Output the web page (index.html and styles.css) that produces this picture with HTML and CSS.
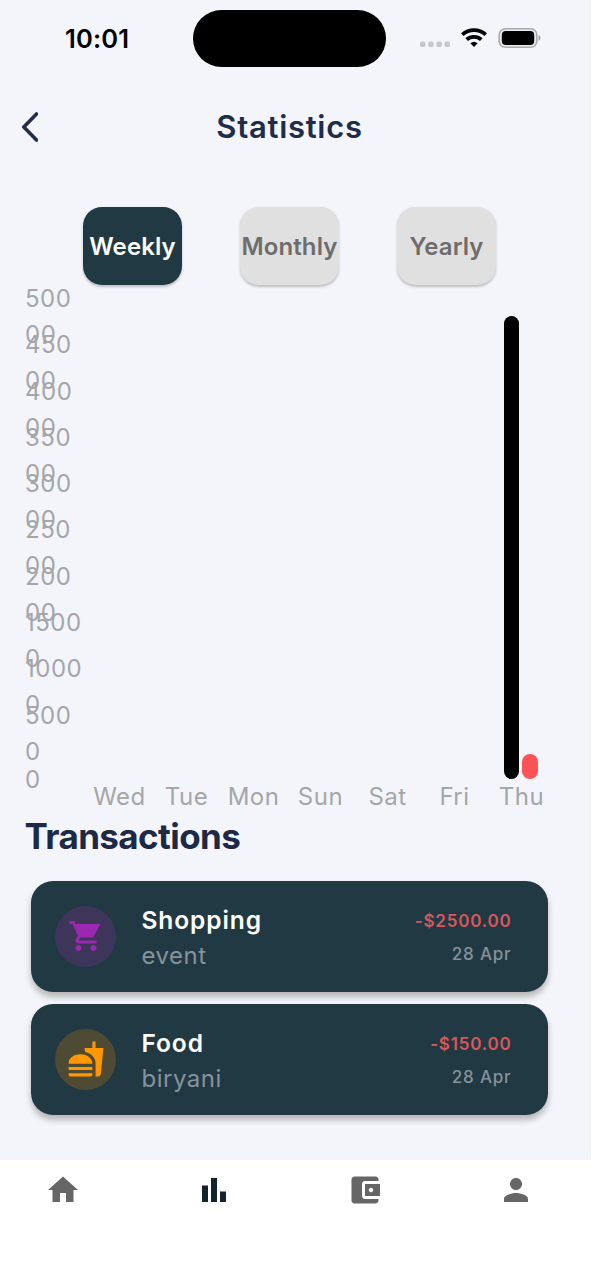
FILE: index.html
```html
<!DOCTYPE html>
<html lang="en">
<head>
<meta charset="utf-8">
<title>Statistics</title>
<link rel="stylesheet" href="styles.css">
</head>
<body>
<div class="screen">
  <div class="status">
    <span class="time">10:01</span>
    <span class="island"></span>
    <svg class="signal" width="124" height="24" viewBox="0 0 124 24">
      <g fill="#c6c7cb"><rect x="1" y="14.500" width="5.400" height="5.400" rx="1.600"/><rect x="9.200" y="14.500" width="5.400" height="5.400" rx="1.600"/><rect x="17.400" y="14.500" width="5.400" height="5.400" rx="1.600"/><rect x="25.600" y="14.500" width="5.400" height="5.400" rx="1.600"/></g>
      <g fill="none" stroke="#000" stroke-width="3.800"><path d="M43.300 7.700a17.500 17.500 0 0 1 23.400 0"/><path d="M47.700 12.700a10.900 10.900 0 0 1 14.600 0"/></g>
      <path d="M51.300 16.300a5.600 5.600 0 0 1 7.400 0L55 20z"/>
      <rect x="80.200" y="1.700" width="37.600" height="18.600" rx="6" fill="#e9e9ec" stroke="#aaabae" stroke-width="1.600"/>
      <rect x="82.800" y="4.100" width="32.400" height="13.800" rx="4"/>
      <path d="M119.600 8.100c2.400 1 2.400 4.800 0 5.800z" fill="#999"/>
    </svg>
  </div>

  <header class="header">
    <svg class="back" width="18" height="30" viewBox="0 0 18 30"><path d="M16.500 2 3.800 15l12.700 13"/></svg>
    <h1 class="title">Statistics</h1>
  </header>

  <nav class="tabs">
    <button class="tab active">Weekly</button>
    <button class="tab monthly">Monthly</button>
    <button class="tab yearly">Yearly</button>
  </nav>

  <section class="chart">
    <div class="axis">
      <div class="tick">500<br>00</div>
      <div class="tick">450<br>00</div>
      <div class="tick">400<br>00</div>
      <div class="tick">350<br>00</div>
      <div class="tick">300<br>00</div>
      <div class="tick">250<br>00</div>
      <div class="tick">200<br>00</div>
      <div class="tick">1500<br>0</div>
      <div class="tick">1000<br>0</div>
      <div class="tick">500<br>0</div>
      <div class="tick">0</div>
    </div>
    <div class="plot">
      <div class="bars">
        <div class="day"></div><div class="day"></div><div class="day"></div><div class="day"></div><div class="day"></div><div class="day"></div>
        <div class="day"><i class="bar income"></i><i class="bar expense"></i></div>
      </div>
      <div class="days"><span>Wed</span><span>Tue</span><span>Mon</span><span>Sun</span><span>Sat</span><span>Fri</span><span>Thu</span></div>
    </div>
  </section>

  <h2 class="heading">Transactions</h2>

  <section class="list">
    <article class="card">
      <span class="badge shopping"><svg width="36" height="36" viewBox="0 0 24 24"><path d="M7 18c-1.100 0-1.990.9-1.990 2S5.900 22 7 22s2-.9 2-2-.9-2-2-2zM1 2v2h2l3.600 7.590-1.350 2.450c-.16.28-.25.61-.25.960 0 1.100.9 2 2 2h12v-2H7.420c-.14 0-.25-.11-.25-.25l.03-.12.900-1.630h7.450c.75 0 1.410-.41 1.750-1.030L21.700 4H5.210l-.94-2H1zm16 16c-1.100 0-1.990.9-1.990 2s.89 2 1.990 2 2-.9 2-2-.9-2-2-2z"/></svg></span>
      <div class="info"><b class="name">Shopping</b><span class="note">event</span></div>
      <div class="sum"><b class="amount">-$2500.00</b><span class="date">28 Apr</span></div>
    </article>
    <article class="card">
      <span class="badge food"><svg width="38" height="38" viewBox="0 0 24 24"><path d="M18.060 22.990h1.660c.84 0 1.530-.64 1.630-1.460L23 5.050h-5V1h-1.970v4.050h-4.970l.3 2.340c1.710.47 3.310 1.320 4.270 2.260 1.440 1.420 2.430 2.890 2.430 5.290v8.050zM1 21.990V21h15.030v.99c0 .55-.45 1-1.010 1H2.010c-.56 0-1.010-.45-1.010-1zm15.030-7c0-8-15.030-8-15.030 0h15.030zM1.020 17h15v2h-15z"/></svg></span>
      <div class="info"><b class="name">Food</b><span class="note">biryani</span></div>
      <div class="sum"><b class="amount">-$150.00</b><span class="date">28 Apr</span></div>
    </article>
  </section>
</div>

<footer class="bottom">
  <svg width="36" height="36" viewBox="0 0 24 24"><path d="M10 20v-6h4v6h5v-8h3L12 3 2 12h3v8z"/></svg>
  <svg class="current" width="36" height="36" viewBox="0 0 24 24"><path d="M4 9h4v11H4zM16 13h4v7h-4zM10 4h4v16h-4z"/></svg>
  <svg width="36" height="36" viewBox="0 0 24 24"><path d="M21 18v1c0 1.100-.9 2-2 2H5c-1.110 0-2-.9-2-2V5c0-1.100.89-2 2-2h14c1.100 0 2 .9 2 2v1h-9c-1.110 0-2 .9-2 2v8c0 1.100.89 2 2 2h9zm-9-2h10V8H12v8zm4-2.500c-.83 0-1.500-.67-1.500-1.500s.67-1.500 1.500-1.500 1.500.67 1.500 1.500-.67 1.500-1.500 1.500z"/></svg>
  <svg width="36" height="36" viewBox="0 0 24 24"><path d="M12 12c2.210 0 4-1.790 4-4s-1.790-4-4-4-4 1.790-4 4 1.790 4 4 4zm0 2c-2.670 0-8 1.340-8 4v2h16v-2c0-2.660-5.330-4-8-4z"/></svg>
</footer>
</body>
</html>
```

FILE: styles.css
```css
* { box-sizing: border-box; }
body { margin: 0; width: 603px; height: 1280px; overflow: hidden; background: #fff; font-family: Inter, "Liberation Sans", sans-serif; }
h1, h2 { margin: 0; }
.screen { width: 591px; height: 1160px; background: #f4f5fa; overflow: hidden; }

.status { display: grid; grid-template-columns: 193px 193px 1fr; height: 77px; align-items: center; }
.time { padding-left: 65px; font-size: 25.5px; font-weight: 600; line-height: 30px; letter-spacing: 0.2px; }
.island { height: 57px; border-radius: 29px; background: #000; }
.signal { margin-left: 32.5px; margin-top: 1px; }

.header { display: grid; grid-template-columns: 40px 1fr 52px; height: 99px; align-items: center; padding-left: 20px; }
.back { fill: none; stroke: #22304a; stroke-width: 3.6; stroke-linecap: round; stroke-linejoin: round; }
.title { text-align: center; font-size: 31px; line-height: 36px; font-weight: 600; color: #1f2d4a; letter-spacing: 0.7px; margin-left: -20px; }

.tabs { display: flex; gap: 58px; padding: 31px 0 0 83px; height: 109px; }
.tab { width: 99px; height: 78px; padding: 0; border: 0; border-radius: 19px; background: #e0e0e0; color: #6d6d6d; font-family: inherit; font-size: 24px; font-weight: 600; letter-spacing: 0.1px; white-space: nowrap; box-shadow: 0 1.5px 2.5px rgba(0,0,0,.22); display: flex; justify-content: center; align-items: center; }
.active { background: #213943; color: #fff; }

.chart { display: flex; height: 529px; color: #a5a6aa; font-size: 24px; }
.axis { width: 85px; padding: 8.8px 0 0 25px; display: grid; grid-template-rows: repeat(11, 46.3px); line-height: 36px; letter-spacing: 0.5px; }
.tick { display: grid; align-content: center; justify-content: start; height: 46.3px; }
.plot { width: 469px; padding-top: 31px; }
.bars { display: grid; grid-template-columns: repeat(7, 67px); height: 462.5px; }
.day { display: flex; align-items: flex-end; justify-content: center; gap: 3px; }
.bar { width: 15.5px; border-radius: 8px; }
.income { height: 462.5px; background: #000; }
.expense { height: 25px; background: #fb5355; }
.days { display: grid; grid-template-columns: repeat(7, 67px); text-align: center; line-height: 36px; letter-spacing: 0.5px; padding-left: 1px; }

.heading { height: 67px; padding-left: 24.5px; font-size: 35px; line-height: 45px; font-weight: 700; letter-spacing: -0.6px; color: #1c2947; }
.list { display: grid; gap: 12.5px; padding-left: 30.5px; }
.card { width: 517.5px; height: 110.5px; border-radius: 22px; background: #213943; display: flex; align-items: center; padding: 0 36.5px 0 24.5px; box-shadow: 0 5px 6px rgba(0,0,0,.26); }
.badge { width: 61px; height: 61px; border-radius: 50%; display: grid; place-items: center; }
.shopping { background: #3d365a; fill: #9c27b0; }
.food { background: #4e4a34; fill: #ff9800; }
.info, .sum { display: flex; flex-direction: column; padding-top: 3px; }
.info { margin-left: 25.5px; flex: 1; line-height: 35.5px; }
.name { color: #fff; font-size: 24.5px; font-weight: 600; letter-spacing: 0.9px; padding-top: 1px; margin-bottom: -1px; }
.note { color: #87939a; font-size: 24px; letter-spacing: 0.5px; }
.sum { align-items: flex-end; line-height: 32.5px; }
.amount { color: #d9575b; font-size: 17px; font-weight: 600; letter-spacing: 0.8px; }
.date { color: #85929a; font-size: 17px; font-weight: 500; letter-spacing: 0.8px; }

.bottom { width: 591px; height: 120px; padding: 12px 57px 0 45px; display: flex; justify-content: space-between; align-items: flex-start; fill: #666; }
.current { fill: #13242b; }
```
